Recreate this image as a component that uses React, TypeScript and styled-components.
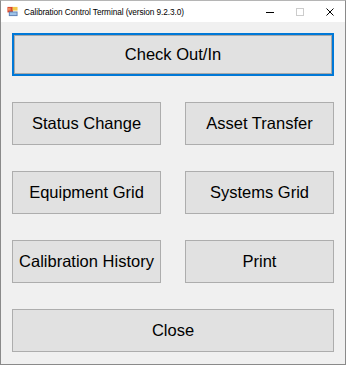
import React from "react";
import styled, { createGlobalStyle } from "styled-components";

const Global = createGlobalStyle`
  html, body { margin: 0; padding: 0; background: #ffffff; }
  * { box-sizing: border-box; }
`;

const Frame = styled.div`
  width: 346px;
  height: 365px;
  border: 1px solid #8a8a8a;
  border-top-color: #b5b5b5;
  background: #f0f0f0;
  display: flex;
  flex-direction: column;
  font-family: "Liberation Sans", Arial, sans-serif;
`;

const TitleBar = styled.div`
  height: 21px;
  background: #ffffff;
  display: flex;
  align-items: center;
  padding-left: 6px;
  flex-shrink: 0;
`;

const AppIcon = styled.svg`
  width: 11px;
  height: 11px;
  margin-right: 6px;
  flex-shrink: 0;
`;

const Title = styled.span`
  font-family: "Liberation Sans", Arial, sans-serif;
  font-size: 8.3px;
  letter-spacing: -0.1px;
  color: #000;
  flex: 1;
  white-space: nowrap;
`;

const Caption = styled.div`
  width: 30px;
  height: 21px;
  display: flex;
  align-items: center;
  justify-content: center;
`;

const Client = styled.div`
  flex: 1;
  padding: 11px 11px 0 11px;
  display: grid;
  grid-template-columns: 149px 149px;
  grid-auto-rows: 43px;
  column-gap: 24px;
  row-gap: 26px;
  align-content: start;
`;

const Btn = styled.button<{ $wide?: boolean; $default?: boolean }>`
  grid-column: ${(p) => (p.$wide ? "1 / span 2" : "auto")};
  background: #e1e1e1;
  border: ${(p) => (p.$default ? "2px solid #0078d7" : "1px solid #adadad")};
  box-shadow: ${(p) => (p.$default ? "inset 0 0 0 1px #a8a8a8" : "none")};
  border-radius: 0;
  font-family: "Liberation Sans", Arial, sans-serif;
  font-size: 16.5px;
  color: #000;
  padding: 0;
  margin: 0;
  display: flex;
  align-items: center;
  justify-content: center;
  white-space: nowrap;
`;

export default function App() {
  return (
    <>
      <Global />
      <Frame>
        <TitleBar>
          <AppIcon viewBox="0 0 12 12">
            <rect x="0.5" y="1" width="6" height="6" fill="#d9452b" />
            <rect x="6" y="1" width="5.5" height="4" fill="#f2c94c" />
            <rect x="2" y="6" width="9.5" height="5" fill="#5d7fb3" />
            <rect x="3" y="7" width="7.5" height="3" fill="#9fc3e8" />
            <rect x="1" y="2" width="3" height="3" fill="#f08a5d" />
          </AppIcon>
          <Title>Calibration Control Terminal (version 9.2.3.0)</Title>
          <Caption>
            <svg width="8" height="8" viewBox="0 0 8 8">
              <line x1="0" y1="4.5" x2="8" y2="4.5" stroke="#000" strokeWidth="1" />
            </svg>
          </Caption>
          <Caption>
            <svg width="8" height="8" viewBox="0 0 8 8">
              <rect x="0.5" y="0.5" width="7" height="7" fill="none" stroke="#cccccc" strokeWidth="1" />
            </svg>
          </Caption>
          <Caption>
            <svg width="8" height="8" viewBox="0 0 8 8">
              <path d="M0.5 0.5 L7.5 7.5 M7.5 0.5 L0.5 7.5" stroke="#000" strokeWidth="1" />
            </svg>
          </Caption>
        </TitleBar>
        <Client>
          <Btn $wide $default>Check Out/In</Btn>
          <Btn>Status Change</Btn>
          <Btn>Asset Transfer</Btn>
          <Btn>Equipment Grid</Btn>
          <Btn>Systems Grid</Btn>
          <Btn>Calibration History</Btn>
          <Btn>Print</Btn>
          <Btn $wide>Close</Btn>
        </Client>
      </Frame>
    </>
  );
}
